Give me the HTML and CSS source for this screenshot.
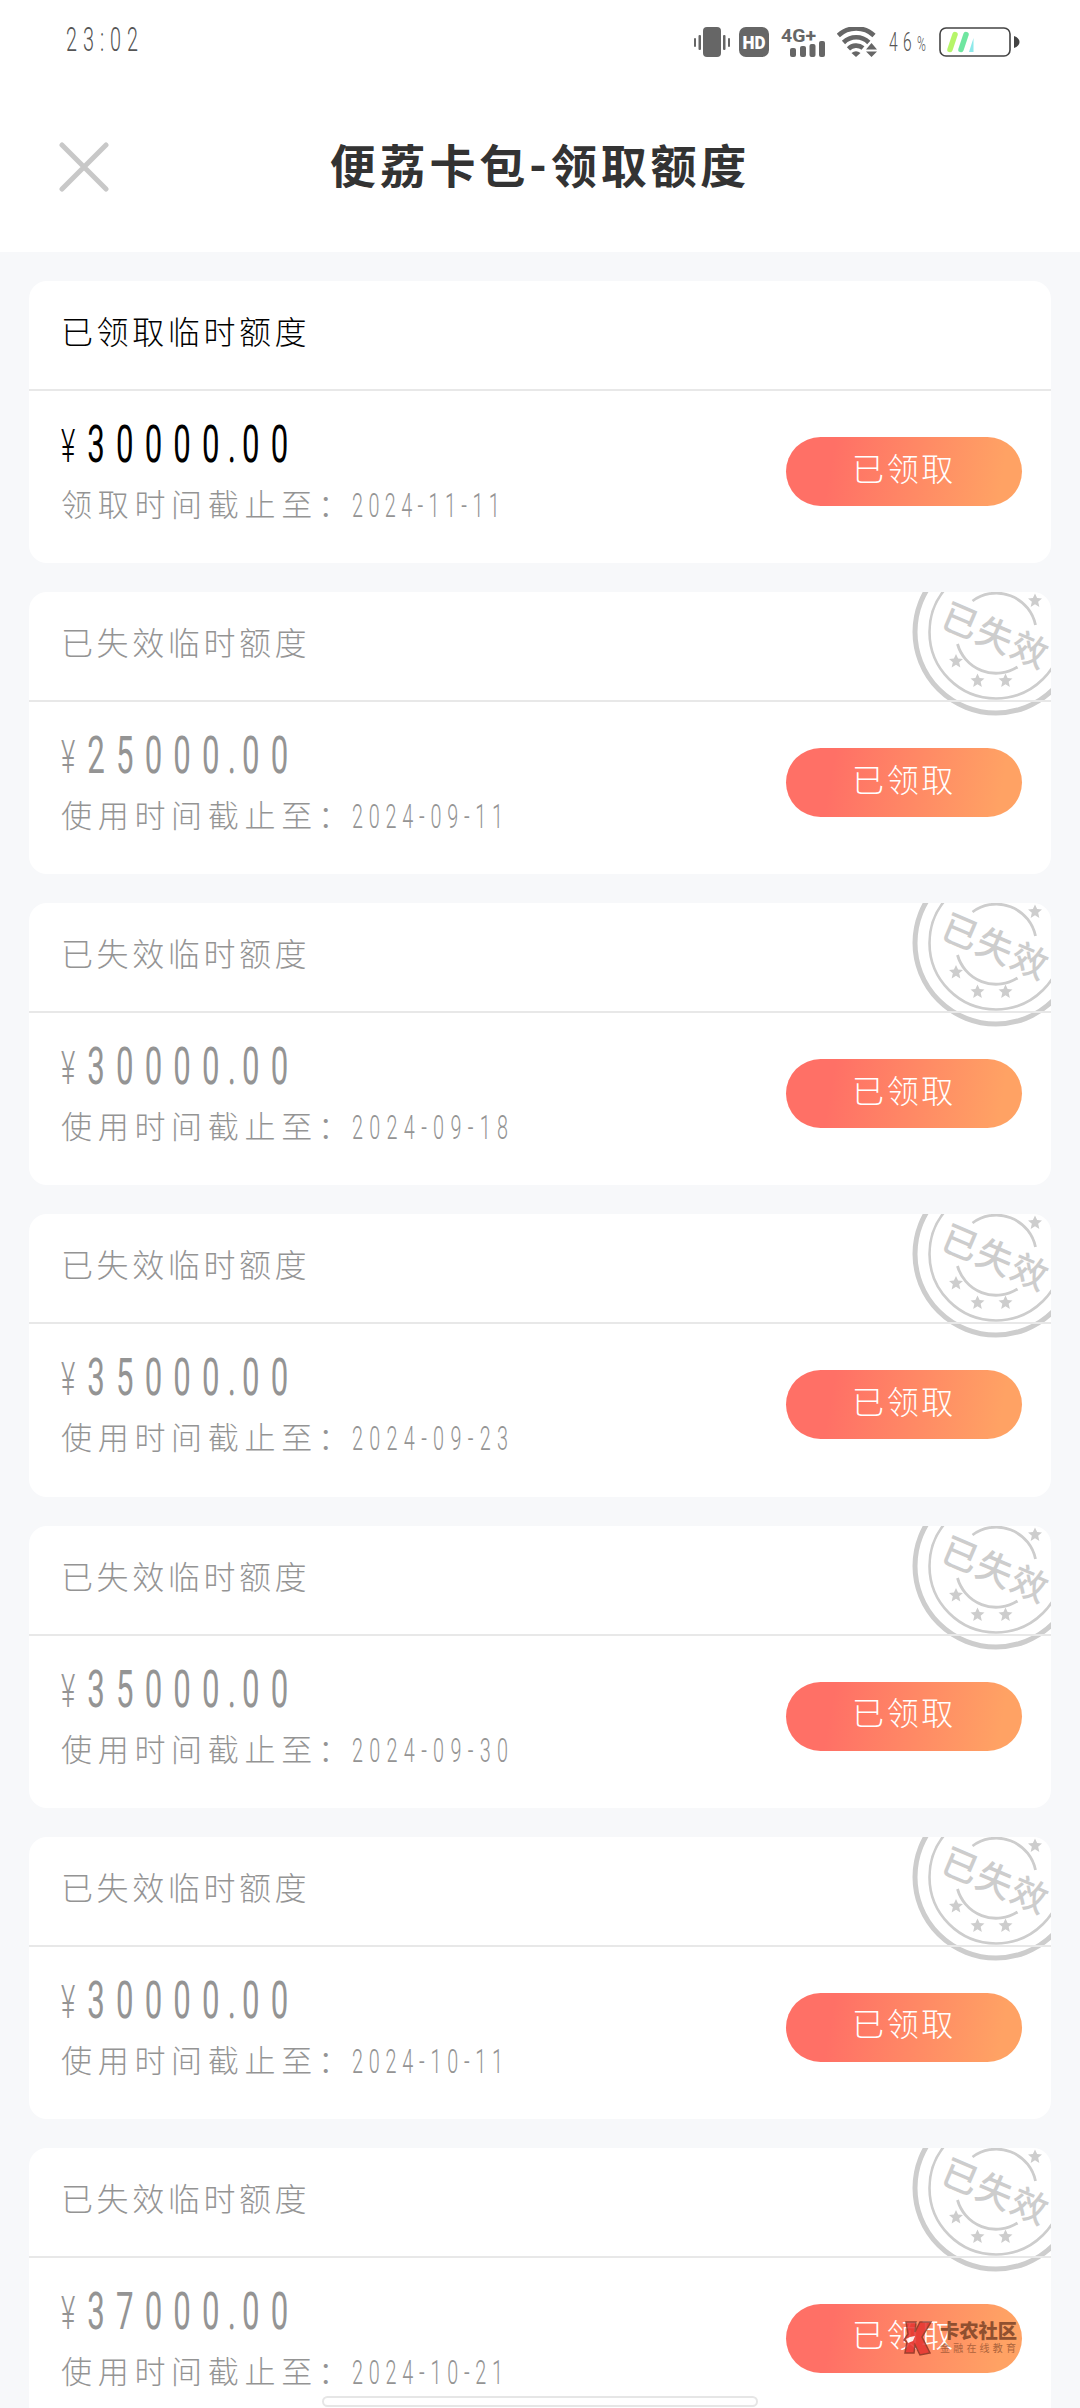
FILE: index.html
```
<!DOCTYPE html>
<html lang="zh-CN">
<head>
    <meta charset="UTF-8">
    <meta name="viewport" content="width=device-width, initial-scale=1.0">
    <title>便荔卡包-领取额度</title>
    <link rel="stylesheet" href="styles.css">
</head>
<body>
    <!-- stamp shared by all expired cards -->
    <svg class="defs" width="0" height="0">
        <symbol id="star" viewBox="-10 -10 20 20">
            <path d="M0-9.5 2.8-3.2 9.3-2.8 4.2 1.6 5.8 8.5 0 5-5.8 8.5-4.2 1.6-9.3-2.8-2.8-3.2Z"/>
        </symbol>
        <symbol id="stamp" viewBox="0 0 140 126">
            <g fill="none" stroke="#cdcdcd">
                <circle cx="85" cy="40" r="81" stroke-width="5"/>
                <circle cx="85" cy="40" r="66.5" stroke-width="2.6"/>
                <path d="M61.5 9A40 40 0 0 1 124.5 33M46.5 52A40 40 0 0 0 106.5 75" stroke-width="2.8"/>
            </g>
            <g fill="#cdcdcd">
                <use href="#star" x="37.500" y="61.500" width="15" height="15"/>
                <use href="#star" x="59" y="81" width="15" height="15"/>
                <use href="#star" x="87" y="81" width="15" height="15"/>
                <use href="#star" x="116.500" y="1" width="15" height="15"/>
                <text class="stamp-text" x="84.500" y="57" text-anchor="middle" transform="rotate(23 85 44)">已失效</text>
            </g>
        </symbol>
    </svg>

    <div class="status-bar">
        <span class="time narrow">23:02</span>
        <div class="status-icons">
            <svg class="i-vibrate" width="36" height="30" viewBox="0 0 36 30" fill="#666">
                <rect x="9" y="0" width="18" height="30" rx="4"/>
                <rect x="0" y="11" width="2" height="9" rx="1"/>
                <rect x="4.500" y="8" width="2.500" height="15" rx="1"/>
                <rect x="29" y="8" width="2.500" height="15" rx="1"/>
                <rect x="34" y="11" width="2" height="9" rx="1"/>
            </svg>
            <svg class="i-hd" width="30" height="30" viewBox="0 0 30 30">
                <rect width="30" height="30" rx="7" fill="#666"/>
                <text x="3.500" y="22" class="hd-text" textLength="23" lengthAdjust="spacingAndGlyphs">HD</text>
            </svg>
            <svg class="i-signal" width="45" height="30" viewBox="0 0 45 30" fill="#666">
                <text x="0" y="14.500" class="net-text" textLength="35" lengthAdjust="spacingAndGlyphs">4G+</text>
                <rect x="9" y="21" width="6" height="9" rx="2"/>
                <rect x="19" y="19" width="6" height="11" rx="2"/>
                <rect x="28.500" y="17" width="6" height="13" rx="2"/>
                <rect x="38" y="14" width="6" height="16" rx="2"/>
            </svg>
            <svg class="i-wifi" width="40" height="30" viewBox="0 0 40 30" fill="none" stroke="#666" stroke-width="4.600">
                <path d="M1.300 8.500A26 26 0 0 1 37 8.500"/>
                <path d="M6.500 15.500A18 18 0 0 1 31.800 15.500"/>
                <path d="M11.500 21.800A11 11 0 0 1 26 21"/>
                <path d="M14.500 26Q19 22.500 23.500 26L19 30Z" fill="#666" stroke="none"/>
                <path d="M29 22.500 34.500 16 40 22.500ZM29 24.500H40L34.500 30Z" fill="#666" stroke="none"/>
            </svg>
            <span class="percent narrow">46<small>%</small></span>
            <svg class="i-battery" width="81" height="30" viewBox="0 0 81 30">
                <rect x="1" y="1" width="70" height="28" rx="6" fill="#fff" stroke="#444" stroke-width="1.600"/>
                <path d="M75 9Q80.500 11 80.500 15T75 21Z" fill="#444"/>
                <path d="M11 22.500 16 7.500" stroke="#b6f569" stroke-width="5.500" stroke-linecap="round"/>
                <path d="M22 22.500 27 7.500" stroke="#6fe6a0" stroke-width="5.500" stroke-linecap="round"/>
                <path d="M30 25 34.500 11V25Z" fill="#8ee9ea"/>
            </svg>
        </div>
    </div>

    <header class="nav">
        <svg class="close" width="50" height="50" viewBox="0 0 50 50" stroke="#c8c8c8" stroke-width="5" stroke-linecap="round">
            <path d="M3 3 47 47M47 3 3 47"/>
        </svg>
        <h1>便荔卡包-领取额度</h1>
    </header>

    <main class="list">
        <section class="card active">
            <h2>已领取临时额度</h2>
            <div class="card-body">
                <div class="info">
                    <div class="amount narrow"><b>¥</b>30000<i>.</i>00</div>
                    <div class="deadline">领取时间截止至：<span class="date narrow ones-4">2024-11-11</span></div>
                </div>
                <button>已领取</button>
            </div>
        </section>

        <section class="card">
            <svg class="stamp"><use href="#stamp"/></svg>
            <h2>已失效临时额度</h2>
            <div class="card-body">
                <div class="info">
                    <div class="amount narrow"><b>¥</b>25000<i>.</i>00</div>
                    <div class="deadline">使用时间截止至：<span class="date narrow ones-2">2024-09-11</span></div>
                </div>
                <button>已领取</button>
            </div>
        </section>

        <section class="card">
            <svg class="stamp"><use href="#stamp"/></svg>
            <h2>已失效临时额度</h2>
            <div class="card-body">
                <div class="info">
                    <div class="amount narrow"><b>¥</b>30000<i>.</i>00</div>
                    <div class="deadline">使用时间截止至：<span class="date narrow">2024-09-18</span></div>
                </div>
                <button>已领取</button>
            </div>
        </section>

        <section class="card">
            <svg class="stamp"><use href="#stamp"/></svg>
            <h2>已失效临时额度</h2>
            <div class="card-body">
                <div class="info">
                    <div class="amount narrow"><b>¥</b>35000<i>.</i>00</div>
                    <div class="deadline">使用时间截止至：<span class="date narrow">2024-09-23</span></div>
                </div>
                <button>已领取</button>
            </div>
        </section>

        <section class="card">
            <svg class="stamp"><use href="#stamp"/></svg>
            <h2>已失效临时额度</h2>
            <div class="card-body">
                <div class="info">
                    <div class="amount narrow"><b>¥</b>35000<i>.</i>00</div>
                    <div class="deadline">使用时间截止至：<span class="date narrow">2024-09-30</span></div>
                </div>
                <button>已领取</button>
            </div>
        </section>

        <section class="card">
            <svg class="stamp"><use href="#stamp"/></svg>
            <h2>已失效临时额度</h2>
            <div class="card-body">
                <div class="info">
                    <div class="amount narrow"><b>¥</b>30000<i>.</i>00</div>
                    <div class="deadline">使用时间截止至：<span class="date narrow ones-2">2024-10-11</span></div>
                </div>
                <button>已领取</button>
            </div>
        </section>

        <section class="card">
            <svg class="stamp"><use href="#stamp"/></svg>
            <h2>已失效临时额度</h2>
            <div class="card-body">
                <div class="info">
                    <div class="amount narrow"><b>¥</b>37000<i>.</i>00</div>
                    <div class="deadline">使用时间截止至：<span class="date narrow ones-2">2024-10-21</span></div>
                </div>
                <button>已领取</button>
            </div>
        </section>
    </main>

    <div class="watermark">
        <svg width="30" height="36" viewBox="0 0 30 36">
            <path d="M3 2H13L12 12 17 2H28L19 17 27 33 17 35 12 25 11 33H2L4 22 1 20 5 14Z" fill="#e5332f" stroke="#8d3325" stroke-width="1.500"/>
            <path d="M3 19 7 17 12 16 10 21 5 23Z" fill="#fff"/>
        </svg>
        <div class="watermark-text">
            <strong>卡农社区</strong>
            <span>金融在线教育</span>
        </div>
    </div>
    <div class="home-bar"></div>
</body>
</html>
```
FILE: styles.css
```
* {
    box-sizing: border-box;
}
body {
    margin: 0;
    height: 2408px;
    overflow: hidden;
    position: relative;
    background: #f7f8fa;
    font-family: Roboto, "Noto Sans CJK SC", sans-serif;
    font-weight: 300;
    color: #949494;
}
svg {
    display: block;
    flex: none;
}
.defs {
    position: absolute;
}
.narrow {
    display: inline-block;
    transform: scaleX(0.6);
    transform-origin: left center;
    white-space: nowrap;
}

/* status bar */
.status-bar {
    display: flex;
    justify-content: space-between;
    height: 84px;
    padding: 0 60px 0 66px;
    background: #fff;
    color: #555;
}
.time {
    font-size: 33px;
    line-height: 80px;
    letter-spacing: 10px;
}
.status-icons {
    display: flex;
    align-items: center;
    height: 84px;
}
.i-hd { margin-left: 9px; }
.i-signal {
    margin-left: 12px;
    overflow: visible;
}
.i-wifi { margin-left: 11px; }
.i-battery { margin-left: 9px; }
.hd-text {
    font: 900 19px Roboto, sans-serif;
    fill: #fff;
}
.net-text {
    font: 700 19px Roboto, sans-serif;
}
.percent {
    width: 41px;
    margin-left: 12px;
    font-size: 26px;
    letter-spacing: 9px;
}
.percent small {
    font-size: 20px;
}

/* title bar */
.nav {
    display: flex;
    align-items: center;
    height: 168px;
    padding: 0 59px 2px;
    background: #fff;
}
.nav h1 {
    flex: 1;
    margin: 0 50px 8px 0;
    text-align: center;
    font-size: 46px;
    font-weight: 700;
    letter-spacing: 3.8px;
    color: #333;
}

/* cards */
.list {
    display: flex;
    flex-direction: column;
    gap: 29px;
    padding: 29px;
}
.card {
    position: relative;
    flex: none;
    height: 282.17px;
    border-radius: 18px;
    background: #fff;
    overflow: hidden;
}
.card h2 {
    position: relative;
    height: 110px;
    margin: 0;
    padding-left: 32px;
    border-bottom: 2px solid #e8e8e8;
    font-size: 32px;
    font-weight: 300;
    line-height: 105px;
    letter-spacing: 3.6px;
}
.card-body {
    display: flex;
    align-items: flex-start;
    justify-content: space-between;
    padding: 27px 29px 0 32px;
}
.amount {
    font-size: 52px;
    font-weight: 400;
    line-height: 54px;
    letter-spacing: 18.6px;
}
.amount b {
    font-size: 46px;
    font-weight: 300;
    letter-spacing: 20px;
}
.amount i {
    margin-left: -5px;
    font-style: normal;
    letter-spacing: 10px;
}
.deadline {
    display: flex;
    font-size: 31px;
    line-height: 46px;
    letter-spacing: 5.7px;
    margin-top: 10px;
}
.date {
    margin-left: -3px;
    font-size: 33px;
    letter-spacing: 10.5px;
}
.date.ones-2 { letter-spacing: 9.6px; }
.date.ones-4 { letter-spacing: 9px; }
.active h2,
.active .amount {
    color: #000;
}
.card button {
    width: 236px;
    height: 69px;
    margin-top: 19px;
    padding: 0 0 10px;
    border: none;
    border-radius: 35px;
    background: linear-gradient(100deg, #ff7066 20%, #ffa264 90%);
    color: #fff;
    font: inherit;
    font-size: 32px;
    letter-spacing: 2.7px;
}
.stamp {
    position: absolute;
    top: 0;
    right: 0;
    width: 140px;
    height: 126px;
}
.stamp-text {
    font: 500 36px "Noto Sans CJK SC", sans-serif;
    letter-spacing: 1.5px;
}

/* overlays */
.watermark {
    position: absolute;
    left: 903px;
    top: 2320px;
    display: flex;
    gap: 7px;
    opacity: 0.85;
}
.watermark-text {
    display: flex;
    flex-direction: column;
    color: #7d4327;
}
.watermark-text strong {
    font-size: 19.3px;
    font-weight: 900;
    line-height: 23px;
}
.watermark-text span {
    font-size: 10px;
    font-weight: 400;
    line-height: 12px;
    letter-spacing: 3.2px;
    opacity: 0.75;
}
.home-bar {
    position: absolute;
    left: 322px;
    top: 2396px;
    width: 436px;
    height: 11px;
    border: 2px solid #e6e6e6;
    border-radius: 6px;
    background: #fff;
}
```
